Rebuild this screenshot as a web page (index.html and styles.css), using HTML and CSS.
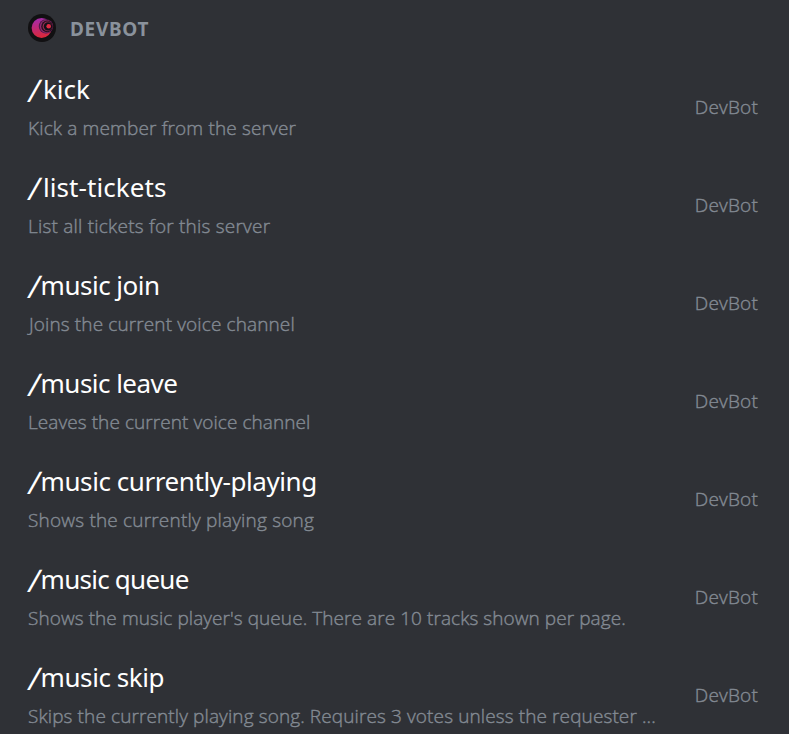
FILE: index.html
```
<!DOCTYPE html>
<html lang="en">
<head>
<meta charset="utf-8">
<title>DevBot commands</title>
<link rel="stylesheet" href="styles.css">
</head>
<body>
<main class="panel">
  <header class="section">
    <svg class="avatar" viewBox="0 0 28 28" aria-hidden="true">
      <defs>
        <linearGradient id="g" x1="0" y1="0" x2="0.15" y2="1">
          <stop offset="0" stop-color="#a02cb4"/>
          <stop offset="0.5" stop-color="#bd2878"/>
          <stop offset="1" stop-color="#d9283c"/>
        </linearGradient>
      </defs>
      <circle cx="14" cy="14" r="14" fill="#111012"/>
      <circle cx="13.6" cy="14" r="10" fill="url(#g)"/>
      <circle cx="18" cy="12.4" r="7.2" fill="#4d1a48"/>
      <circle cx="18.3" cy="12.4" r="6.4" fill="#962a70"/>
      <circle cx="19" cy="12.4" r="5.8" fill="#25101f"/>
      <circle cx="19.4" cy="12.4" r="4.8" fill="#952a50"/>
      <circle cx="20" cy="12.4" r="4.2" fill="#15101a"/>
      <circle cx="20.7" cy="12.2" r="2.3" fill="#e02c42"/>
    </svg>
    <h1 class="section-name">DEVBOT</h1>
  </header>
  <ul class="commands">
    <li class="command">
      <div class="info"><h2 class="name name-kick"><span class="slash">/</span>kick</h2><p class="desc desc-kick">Kick a member from the server</p></div>
      <span class="source">DevBot</span>
    </li>
    <li class="command">
      <div class="info"><h2 class="name name-list"><span class="slash">/</span>list-tickets</h2><p class="desc desc-list">List all tickets for this server</p></div>
      <span class="source">DevBot</span>
    </li>
    <li class="command">
      <div class="info"><h2 class="name name-join"><span class="slash">/</span>music join</h2><p class="desc desc-join">Joins the current voice channel</p></div>
      <span class="source">DevBot</span>
    </li>
    <li class="command">
      <div class="info"><h2 class="name name-leave"><span class="slash">/</span>music leave</h2><p class="desc desc-leave">Leaves the current voice channel</p></div>
      <span class="source">DevBot</span>
    </li>
    <li class="command">
      <div class="info"><h2 class="name name-current"><span class="slash">/</span>music currently-playing</h2><p class="desc desc-current">Shows the currently playing song</p></div>
      <span class="source">DevBot</span>
    </li>
    <li class="command">
      <div class="info"><h2 class="name name-queue"><span class="slash">/</span>music queue</h2><p class="desc desc-queue">Shows the music player's queue. There are 10 tracks shown per page.</p></div>
      <span class="source">DevBot</span>
    </li>
    <li class="command">
      <div class="info"><h2 class="name name-skip"><span class="slash">/</span>music skip</h2><p class="desc desc-skip">Skips the currently playing song. Requires 3 votes unless the requester ...</p></div>
      <span class="source">DevBot</span>
    </li>
  </ul>
</main>
</body>
</html>
```
FILE: styles.css
```
* { box-sizing: border-box; margin: 0; padding: 0; }
body {
  height: 734px;
  overflow: hidden;
  background: #2f3136;
  font-family: "Open Sans", sans-serif;
}
.panel { padding: 14px 31px 0 28px; }
.section { display: flex; align-items: center; gap: 14px; height: 28px; }
.avatar { width: 28px; height: 28px; flex: none; }
.section-name {
  font: 700 19px/28px "Noto Sans", sans-serif;
  letter-spacing: 0.7px;
  color: #8a929c;
  padding-top: 2px;
}
.commands { list-style: none; padding-top: 16px; }
.command {
  display: flex;
  align-items: center;
  justify-content: space-between;
  height: 98px;
}
.info { min-width: 0; }
.name {
  font: 400 26px/40px "Noto Sans", sans-serif;
  color: #fff;
  white-space: nowrap;
}
.slash {
  display: inline-block;
  width: 12.6px;
  font-size: 31px;
  line-height: 30px;
  letter-spacing: 0;
  transform: translate(1.2px, 2.5px) skewX(-11deg);
}
.name-kick .slash, .name-list .slash { width: 15px; }
.name-kick { letter-spacing: -0.05px; }
.name-list { letter-spacing: 0.07px; }
.name-join { letter-spacing: -0.5px; }
.name-leave { letter-spacing: -0.53px; }
.name-current { letter-spacing: -0.43px; }
.name-queue { letter-spacing: -0.75px; }
.name-skip { letter-spacing: -0.43px; }
.desc, .source {
  font-size: 19px;
  font-weight: 300;
  line-height: 36px;
  color: #838a93;
  -webkit-text-stroke: 0.4px #838a93;
  white-space: nowrap;
}
.desc { padding-top: 1px; margin-bottom: -1px; }
.desc-kick { letter-spacing: 0.15px; }
.desc-list { letter-spacing: 0.22px; }
.desc-join { letter-spacing: 0.12px; text-indent: 1px; }
.desc-leave { letter-spacing: 0.07px; }
.desc-current { letter-spacing: 0.19px; }
.desc-queue { letter-spacing: 0.07px; }
.desc-skip { letter-spacing: 0.11px; }
.source { flex: none; letter-spacing: 0.2px; }
```
